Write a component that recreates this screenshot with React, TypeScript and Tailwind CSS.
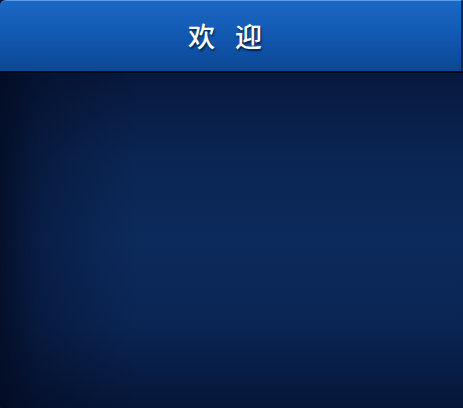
import React from 'react';

export default function App() {
  return (
    <div className="w-[463px] h-[408px] bg-[#05132f] flex flex-col overflow-hidden" style={{ fontFamily: '"Noto Sans CJK SC", "Noto Sans", sans-serif' }}>
      <header className="h-[71px] shrink-0 rounded-tl-[6px] border-t border-[#5a9be0] border-r-2 border-r-[#0a2a55] bg-gradient-to-b from-[#1b68c6] via-[#1258b0] to-[#0b4794] flex items-center justify-center shadow-[0_1px_0_#010814]">
        <h1 className="text-white text-[27px] font-medium tracking-[7px] pr-[4px] [text-shadow:1px_2px_2px_rgba(0,0,0,0.6)]">
          欢 迎
        </h1>
      </header>
      <div className="h-[2px] bg-[#020a1c]" />
      <main className="flex-1 rounded-bl-[4px] bg-[linear-gradient(to_right,rgba(2,8,28,0.75)_0px,rgba(2,8,28,0.35)_40px,rgba(2,8,28,0.1)_100px,rgba(2,8,28,0)_140px),linear-gradient(to_bottom,#07183d_0%,#0a2552_25%,#0c2a5c_50%,#0a2554_75%,#061638_100%)]" />
    </div>
  );
}
